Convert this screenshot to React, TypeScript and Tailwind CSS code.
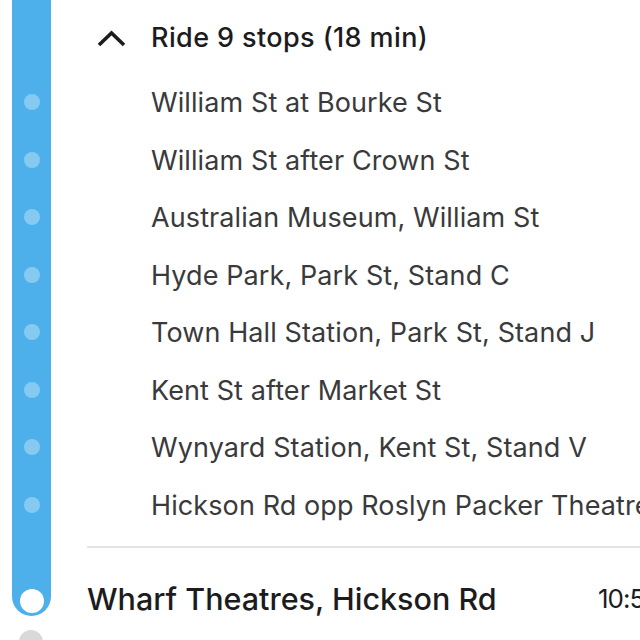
import React from "react";

const stops = [
  "William St at Bourke St",
  "William St after Crown St",
  "Australian Museum, William St",
  "Hyde Park, Park St, Stand C",
  "Town Hall Station, Park St, Stand J",
  "Kent St after Market St",
  "Wynyard Station, Kent St, Stand V",
  "Hickson Rd opp Roslyn Packer Theatre",
];

export default function App() {
  return (
    <div
      className="flex h-[640px] w-[640px] overflow-hidden bg-white"
      style={{ fontFamily: "Inter, 'Open Sans', sans-serif" }}
    >
      {/* timeline column */}
      <div className="flex w-[87px] shrink-0 flex-col pl-[12px]">
        <div className="flex h-[616px] w-[39px] shrink-0 flex-col items-center rounded-b-full bg-[#4eb0ea] pt-[94px]">
          <div className="flex flex-col items-center gap-[41.5px]">
            {stops.map((s) => (
              <div key={s} className="h-[16px] w-[16px] shrink-0 rounded-full bg-[#86c9f1]" />
            ))}
          </div>
          <div className="mt-[76px] h-[24px] w-[24px] shrink-0 rounded-full bg-white" />
        </div>
        <div className="ml-[7px] mt-[14px] h-[24px] w-[24px] shrink-0 rounded-full bg-[#d9d9dc]" />
      </div>

      {/* content column */}
      <div className="flex min-w-0 flex-1 flex-col overflow-hidden">
        <div className="flex h-[73px] shrink-0 items-center pt-[4px]">
          <svg width="30" height="20" viewBox="0 0 30 20" className="ml-[10px] shrink-0">
            <polyline
              points="2,16 14.5,4 27,16"
              fill="none"
              stroke="#1c1c1e"
              strokeWidth="3.6"
              strokeLinejoin="miter"
            />
          </svg>
          <span className="ml-[24px] whitespace-nowrap text-[27px] font-medium tracking-[0.4px] text-[#1c1c1e]">
            Ride 9 stops (18 min)
          </span>
        </div>
        {stops.map((s) => (
          <div key={s} className="flex h-[57.5px] shrink-0 items-center pt-[3px]">
            <span className="ml-[64px] whitespace-nowrap text-[27px] tracking-[0.1px] text-[#3a3a3c]">{s}</span>
          </div>
        ))}
        <div className="mt-[13px] h-[2px] w-full shrink-0 bg-[#e4e4e8]" />
        <div className="flex h-[80px] shrink-0 items-start pt-[28px]">
          <span className="w-[511px] shrink-0 whitespace-nowrap text-[30.5px] font-medium text-[#1c1c1e]">
            Wharf Theatres, Hickson Rd
          </span>
          <span className="shrink-0 whitespace-nowrap pt-[3px] text-[26px] tracking-[-1px] text-[#1c1c1e]">10:5</span>
        </div>
      </div>
    </div>
  );
}
